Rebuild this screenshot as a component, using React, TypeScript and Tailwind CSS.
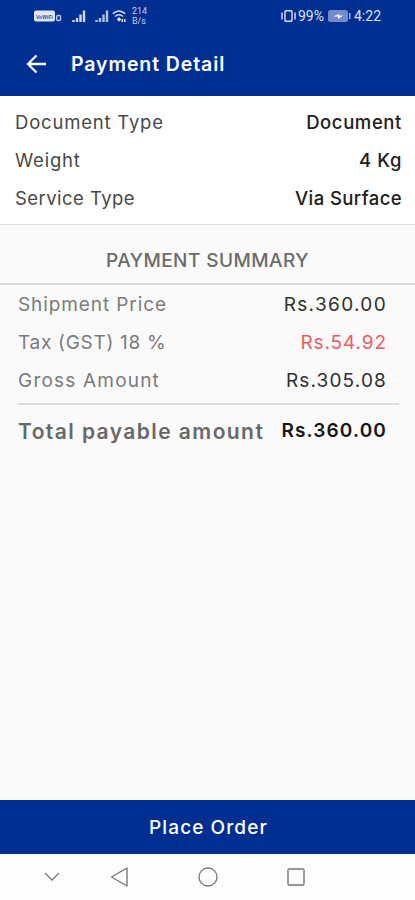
import type { ReactNode } from "react";

// ─── data ─────────────────────────────────────────────────────────────────────
const details = [
  { label: "Document Type", value: "Document", labelCls: "tracking-[0.8px]", valueCls: "tracking-[0.6px]" },
  { label: "Weight", value: "4 Kg", labelCls: "tracking-[0.8px]", valueCls: "tracking-[0.6px]" },
  { label: "Service Type", value: "Via Surface", labelCls: "tracking-[0.45px]", valueCls: "tracking-[0.4px]" },
];

const charges = [
  { label: "Shipment Price", value: "Rs.360.00", labelCls: "tracking-[0.9px]", valueCls: "tracking-[1.35px] text-[#303030]" },
  { label: "Tax (GST) 18 %", value: "Rs.54.92", labelCls: "tracking-[0.7px]", valueCls: "tracking-[0.9px] text-[#f05a60]" },
  { label: "Gross Amount", value: "Rs.305.08", labelCls: "tracking-[1.2px]", valueCls: "tracking-[1.15px] text-[#303030]" },
];

// ─── pieces ───────────────────────────────────────────────────────────────────
function Row({ children }: { children: ReactNode }) {
  return <div className="flex h-[38px] items-center justify-between pt-0.5 whitespace-nowrap">{children}</div>;
}

function Signal({ className, dim }: { className: string; dim?: boolean }) {
  return (
    <svg className={className} width="14" height="14" viewBox="0 0 14 14" fill="none" stroke={dim ? "#b3c0e6" : "#d0d9f2"} strokeWidth="2.400">
      <path d="M1.500 13v-2M5 13V9M8.500 13V5.500M12 13V1.500" />
    </svg>
  );
}

function StatusBar() {
  return (
    <div className="flex h-8 items-center pl-[34px] text-[#dbe2f5]">
      <svg width="28" height="12" viewBox="0 0 28 12" fill="none">
        <rect x="0" y="0.500" width="21" height="11" rx="2" fill="#dfe5f7" />
        <text x="2" y="8.500" fontSize="6" fontWeight="700" fontFamily="Liberation Sans, sans-serif" fill="#39529f" textLength="17" lengthAdjust="spacingAndGlyphs">VoWiFi</text>
        <rect x="22.700" y="5.500" width="3.800" height="5" rx="1" stroke="#b5c2e8" strokeWidth="1.500" />
      </svg>
      <Signal className="ml-[10px]" />
      <Signal className="ml-[9px]" dim />
      <svg className="ml-[3px]" width="15" height="14" viewBox="0 0 15 14" fill="none" stroke="#dbe2f5" strokeWidth="1.500">
        <path d="M0.800 4.800q6.200-5.600 12.400 0M3 7.500q4-3.400 8 0" />
        <path d="M7 8l-2.200 2.200L7 12.800l2.200-2.600z" fill="#dbe2f5" stroke="none" />
        <path d="M10.300 13v-3M12.800 13v-3" />
      </svg>
      <div className="ml-[5px] font-['Roboto','Liberation_Sans',sans-serif] text-[9px] leading-[10px] text-[#c5d0ee]">
        <div>214</div>
        <div>B/s</div>
      </div>
      <svg className="ml-auto" width="15" height="12" viewBox="0 0 15 12" fill="none" stroke="#dbe2f5" strokeWidth="1.400">
        <rect x="4" y="0.700" width="7" height="10.600" rx="1" />
        <path d="M1 2.500v7M14 2.500v7" />
      </svg>
      <span className="ml-[2px] w-[27px] font-['Roboto','Liberation_Sans',sans-serif] text-[14px]">99%</span>
      <svg className="ml-[3px]" width="23" height="12" viewBox="0 0 23 12">
        <rect x="0" y="0" width="20" height="12" rx="2.500" fill="#718bcb" />
        <path d="M21 3h1.500v6H21z" fill="#9daedd" />
        <path d="M5 6.500l6-2.500v1.500h4L10 9V6.500z" fill="#fff" />
      </svg>
      <span className="ml-[3px] mr-[33px] w-[28px] font-['Roboto','Liberation_Sans',sans-serif] text-[14px]">4:22</span>
    </div>
  );
}

// ─── screen ───────────────────────────────────────────────────────────────────
export default function App() {
  return (
    <div className="flex h-[900px] w-[415px] flex-col overflow-hidden bg-[#fafafa] font-['Inter','Liberation_Sans',sans-serif] text-[19px]">
      <header className="h-24 shrink-0 bg-[#002f91] text-white">
        <StatusBar />
        <div className="flex h-16 items-center pl-[26px]">
          <svg width="21" height="20" viewBox="0 0 21 20" fill="none" stroke="currentColor" strokeWidth="2.300">
            <path d="M20 10H2M10.500 1.500L2 10l8.500 8.500" />
          </svg>
          <h1 className="ml-6 pt-0.5 whitespace-nowrap text-[19.5px] font-semibold tracking-[0.9px]">Payment Detail</h1>
        </div>
      </header>

      <section className="h-[129px] border-b border-[#dcdcdc] bg-white pt-[7px] pr-[13px] pl-[15px] text-[18.5px]">
        {details.map(({ label, value, labelCls, valueCls }) => (
          <Row key={label}>
            <span className={`text-[#484848] ${labelCls}`}>{label}</span>
            <span className={`font-medium text-[#202020] ${valueCls}`}>{value}</span>
          </Row>
        ))}
      </section>

      <h2 className="flex h-[60px] items-center justify-center border-b-2 border-[#d9d9d9] pt-3.5 font-medium tracking-[0.45px] text-[#6b6b6b]">
        PAYMENT SUMMARY
      </h2>

      {/* Charges and total */}
      <section className="pr-4 pl-[18px]">
        <div className="border-b-2 border-[#dcdcdc] pr-3 pb-1">
          {charges.map(({ label, value, labelCls, valueCls }) => (
            <Row key={label}>
              <span className={`text-[#7a7a7a] ${labelCls}`}>{label}</span>
              <span className={valueCls}>{value}</span>
            </Row>
          ))}
        </div>
        <div className="flex h-[52px] items-center justify-between pt-0.5 pr-3 whitespace-nowrap">
          <span className="text-[21px] font-semibold tracking-[1.42px] text-[#686868]">Total payable amount</span>
          <span className="pb-0.5 font-semibold tracking-[1.15px] text-[#151515]">Rs.360.00</span>
        </div>
      </section>

      <button className="mt-auto h-[54px] shrink-0 bg-[#002f91] pt-0.5 pl-0.5 font-medium tracking-[1.1px] text-white">Place Order</button>

      {/* System navigation */}
      <nav className="flex h-[46px] shrink-0 items-center bg-[#fdfdfd] pl-[44px]">
        <svg width="16" height="10" viewBox="0 0 16 10" fill="none" stroke="#777" strokeWidth="1.300">
          <path d="M1 1l7 7 7-7" />
        </svg>
        <svg className="ml-[50px]" width="19" height="20" viewBox="0 0 19 20" fill="none" stroke="#777" strokeWidth="1.400" strokeLinejoin="round">
          <path d="M17 1v18L1.500 10z" />
        </svg>
        <svg className="ml-[69px]" width="20" height="20" viewBox="0 0 20 20" fill="none" stroke="#777" strokeWidth="1.300">
          <circle cx="10" cy="10" r="9" />
        </svg>
        <svg className="ml-[69px]" width="18" height="18" viewBox="0 0 18 18" fill="none" stroke="#777" strokeWidth="1.400">
          <rect x="1" y="1" width="16" height="16" rx="1" />
        </svg>
      </nav>
    </div>
  );
}
